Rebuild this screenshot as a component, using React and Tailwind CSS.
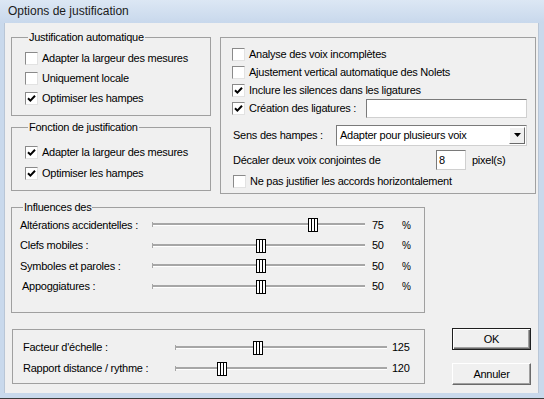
import React from "react";

const Check = ({ checked }) => (
  <span className="w-[13px] h-[13px] shrink-0 bg-white border border-t-[#8a8a8a] border-l-[#8a8a8a] border-b-[#e2e2e2] border-r-[#e2e2e2] flex items-center justify-center">
    {checked && (
      <svg width="9" height="9" viewBox="0 0 9 9">
        <path d="M1 4.2 L3.4 6.6 L8 1.8" stroke="#000" strokeWidth="2" fill="none" />
      </svg>
    )}
  </span>
);

const CheckRow = ({ checked, label, h }) => (
  <div className={`flex items-center gap-[4px] ${h}`}>
    <Check checked={checked} />
    <span>{label}</span>
  </div>
);

const Thumb = ({ left }) => (
  <svg className="absolute top-0" style={{ left: left - 5 }} width="10" height="14" viewBox="0 0 10 14">
    <rect x="0.5" y="0.5" width="9" height="13" fill="#fff" stroke="#000" />
    <line x1="3.5" y1="1" x2="3.5" y2="13" stroke="#000" />
    <line x1="6.5" y1="1" x2="6.5" y2="13" stroke="#000" />
  </svg>
);

const Slider = ({ w, pos }) => (
  <div className={`relative h-[14px] shrink-0 ${w}`}>
    <div className="absolute left-0 right-0 top-[5px] h-[3px] border-t-2 border-t-[#a6a6a6] bg-white" />
    <div className="absolute left-0 top-[4px] h-[5px] w-[1px] bg-[#a6a6a6]" />
    <Thumb left={pos} />
  </div>
);

const Sunken = "bg-white border border-t-[#7a7a7a] border-l-[#7a7a7a] border-b-[#d0d0d0] border-r-[#d0d0d0]";

export default function App() {
  const influences = [
    { label: "Altérations accidentelles :", pos: 161, val: "75", extra: "" },
    { label: "Clefs mobiles :", pos: 109, val: "50", extra: "" },
    { label: "Symboles et paroles :", pos: 109, val: "50", extra: "" },
    { label: "Appoggiatures :", pos: 109, val: "50", extra: "pl-[2px]" },
  ];
  return (
    <div className="w-[544px] h-[399px] flex flex-col overflow-hidden bg-[#c9d9ec] font-['Liberation_Sans',Arial,sans-serif] text-[11px] leading-[13px] text-black tracking-[-0.25px]">
      <div className="h-[23px] shrink-0 flex items-center pl-[8px] text-[12px] text-[#1b1b1b] tracking-normal bg-gradient-to-b from-[#dce7f4] to-[#c8d8ec]">
        Options de justification
      </div>
      <div className="ml-[4px] mr-[5px] h-[370px] shrink-0 bg-[#f0f0f0] border-l border-r border-[#b9c6d6] flex flex-col">
        {/* top row */}
        <div className="flex items-start mt-[8px] ml-[6px]">
          <div className="flex flex-col w-[200px]">
            <fieldset className="h-[85px] border border-[#a0a0a0] pl-[13px] pt-[4px]">
              <legend className="ml-[3px] px-[1px] leading-[13px]">Justification automatique</legend>
              <CheckRow h="h-[20px]" label="Adapter la largeur des mesures" />
              <CheckRow h="h-[20px]" label="Uniquement locale" />
              <CheckRow h="h-[21px]" checked label="Optimiser les hampes" />
            </fieldset>
            <fieldset className="mt-[5px] h-[70px] border border-[#a0a0a0] pl-[13px] pt-[8px]">
              <legend className="ml-[3px] px-[1px] leading-[13px]">Fonction de justification</legend>
              <CheckRow h="h-[21px]" checked label="Adapter la largeur des mesures" />
              <CheckRow h="h-[21px]" checked label="Optimiser les hampes" />
            </fieldset>
          </div>
          <div className="ml-[9px] mt-[6px] w-[316px] h-[157px] border border-[#a0a0a0] pl-[11px] pr-[8px] pt-[7px] flex flex-col">
            <CheckRow h="h-[18px]" label="Analyse des voix incomplètes" />
            <CheckRow h="h-[18px]" label="Ajustement vertical automatique des Nolets" />
            <CheckRow h="h-[18px]" checked label="Inclure les silences dans les ligatures" />
            <div className="flex items-center h-[18px]">
              <div className="flex items-center gap-[4px]">
                <Check checked />
                <span>Création des ligatures :</span>
              </div>
              <div className={`ml-auto w-[161px] h-[19px] ${Sunken}`} />
            </div>
            <div className="flex items-center h-[22px] mt-[7px] pl-[1px]">
              <span>Sens des hampes :</span>
              <div className={`ml-auto w-[191px] h-[21px] flex items-center ${Sunken}`}>
                <span className="pl-[3px] flex-1">Adapter pour plusieurs voix</span>
                <div className="w-[16px] h-[17px] mr-[1px] bg-[#f0f0f0] border border-t-[#fff] border-l-[#fff] border-b-[#6a6a6a] border-r-[#6a6a6a] flex items-center justify-center">
                  <svg width="7" height="4" viewBox="0 0 7 4">
                    <path d="M0 0 H7 L3.5 4 Z" fill="#000" />
                  </svg>
                </div>
              </div>
            </div>
            <div className="flex items-center h-[20px] mt-[4px] pl-[1px]">
              <span className="w-[203px]">Décaler deux voix conjointes de</span>
              <div className={`w-[30px] h-[20px] flex items-center pl-[2px] ${Sunken}`}>8</div>
              <span className="ml-[6px]">pixel(s)</span>
            </div>
            <div className="mt-[2px] pl-[1px]">
              <CheckRow h="h-[18px]" label="Ne pas justifier les accords horizontalement" />
            </div>
          </div>
        </div>
        {/* influences */}
        <fieldset className="mt-[7px] ml-[6px] w-[414px] h-[112px] border border-[#a0a0a0] pl-[8px] pt-[1px]">
          <legend className="ml-[3px] px-[1px] leading-[13px]">Influences des</legend>
          {influences.map((r) => (
            <div key={r.label} className="flex items-center h-[20.5px]">
              <span className={`w-[132px] shrink-0 ${r.extra}`}>{r.label}</span>
              <Slider w="w-[213px]" pos={r.pos} />
              <span className="ml-[7px] w-[30px]">{r.val}</span>
              <span className="text-[10px]">%</span>
            </div>
          ))}
        </fieldset>
        {/* bottom */}
        <div className="flex items-start mt-[16px] ml-[7px]">
          <div className="w-[413px] h-[55px] border border-[#a0a0a0] pl-[10px] pt-[7px] flex flex-col">
            <div className="flex items-center h-[21px]">
              <span className="w-[152px]">Facteur d'échelle :</span>
              <Slider w="w-[212px]" pos={83} />
              <span className="ml-[5px]">125</span>
            </div>
            <div className="flex items-center h-[21px]">
              <span className="w-[152px]">Rapport distance / rythme :</span>
              <Slider w="w-[212px]" pos={47} />
              <span className="ml-[5px]">120</span>
            </div>
          </div>
          <div className="ml-[27px] -mt-[1px] flex flex-col gap-[13px]">
            <div className="w-[79px] h-[22px] bg-[#f0f0f0] border border-[#1f1f1f] shadow-[inset_1px_1px_0_#fff,inset_-1px_-1px_0_#6a6a6a,inset_-2px_-2px_0_#a0a0a0] flex items-center justify-center">
              OK
            </div>
            <div className="w-[79px] h-[22px] bg-[#f0f0f0] border border-t-[#fff] border-l-[#fff] border-b-[#6a6a6a] border-r-[#6a6a6a] shadow-[inset_-1px_-1px_0_#a0a0a0] flex items-center justify-center">
              Annuler
            </div>
          </div>
        </div>
      </div>
      <div className="flex-1" />
      <div className="h-[1px] bg-[#3c3c3c]" />
    </div>
  );
}
